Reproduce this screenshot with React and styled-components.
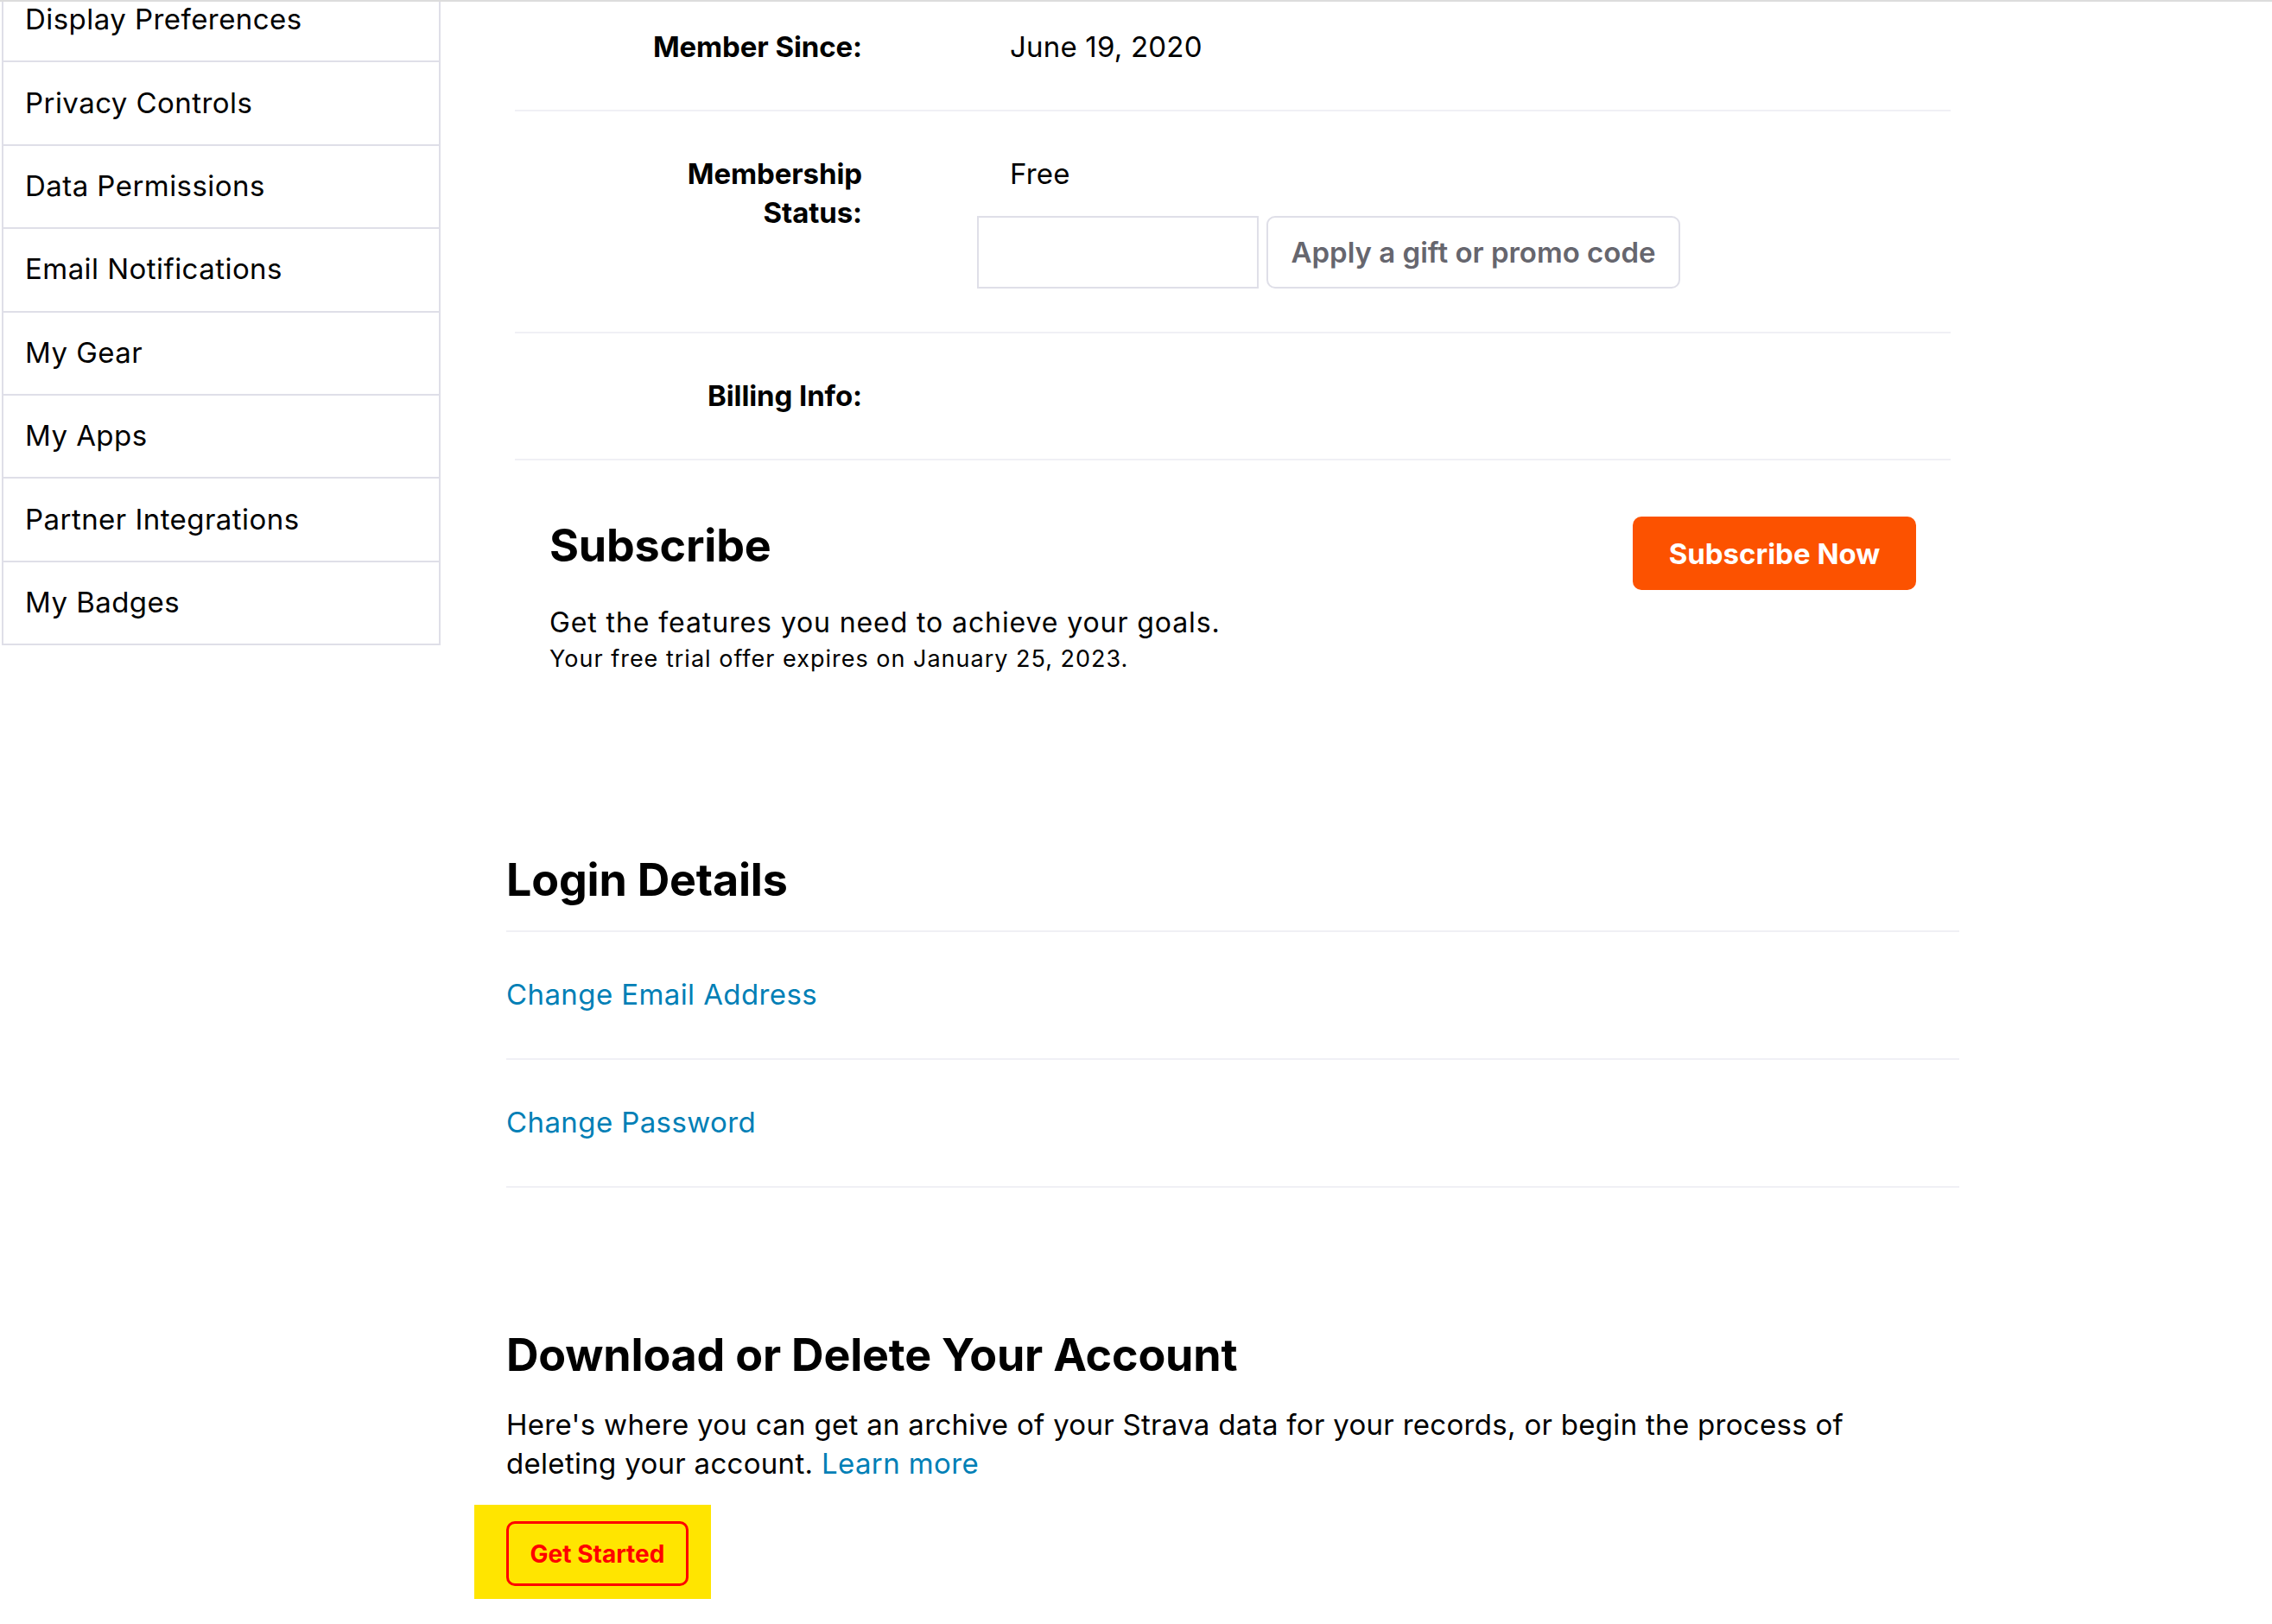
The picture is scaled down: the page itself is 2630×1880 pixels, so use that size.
import React from "react";
import styled, { createGlobalStyle } from "styled-components";

const GlobalStyle = createGlobalStyle`
    html,
    body {
        margin: 0;
        padding: 0;
        background: #fff;
    }
    body {
        font-family: Inter, "Noto Sans", "Liberation Sans", sans-serif;
        color: #000;
    }
    * {
        box-sizing: border-box;
    }
`;

const Viewport = styled.div`
    border-top: 2px solid #dcdcdc;
    height: 100vh;
    overflow: hidden;
    width: 100%;
`;

// page is scrolled a little, so the first sidebar row is cut off
const Scrolled = styled.div`
    display: flex;
    align-items: flex-start;
    margin-top: -26px;
`;

const Sidebar = styled.nav`
    border-left: 2px solid #dfdfe8;
    border-right: 2px solid #dfdfe8;
    flex-shrink: 0;
    margin-left: 2px;
    width: 508px;
`;

const SideItem = styled.a`
    align-items: center;
    border-bottom: 2px solid #dfdfe8;
    color: #000;
    display: flex;
    font-size: 33px;
    height: 96.4px;
    letter-spacing: 0.45px;
    padding: 0 0 2px 25px;
    text-decoration: none;
`;

const Main = styled.main`
    padding: 6px 0 0 76px;
    width: 1758px;
`;

const Table = styled.div`
    margin: 0 10px;
`;

const Row = styled.div`
    align-items: flex-start;
    border-bottom: 2px solid #f0f0f5;
    display: flex;
    padding: 50px 0;
`;

const Label = styled.div`
    flex-shrink: 0;
    font-size: 33px;
    font-weight: 700;
    letter-spacing: -0.1px;
    line-height: 45px;
    text-align: right;
    width: 402px;
`;

const Value = styled.div`
    display: flex;
    flex-direction: column;
    margin-left: 133px;
`;

const ValueText = styled.div`
    font-size: 33px;
    letter-spacing: 0.2px;
    line-height: 45px;
    padding-left: 38px;
`;

const PromoForm = styled.div`
    display: flex;
    gap: 9px;
    margin-top: 26px;
`;

const PromoInput = styled.input`
    border: 2px solid #dfdfe8;
    border-radius: 0;
    font-family: inherit;
    font-size: 30px;
    height: 84px;
    padding: 0 16px;
    width: 326px;
`;

const GhostButton = styled.button`
    background: #fff;
    border: 2px solid #dfdfe8;
    border-radius: 10px;
    color: #66666e;
    font-family: inherit;
    font-size: 33px;
    font-weight: 600;
    height: 84px;
    padding: 0 24px;
    width: 479px;
`;

const SubscribeBlock = styled.div`
    display: flex;
    justify-content: space-between;
    padding: 65px 40px 0;
`;

const Heading = styled.h2`
    font-size: 52px;
    font-weight: 700;
    letter-spacing: -0.2px;
    line-height: 62px;
    margin: ${(p) => p.$top || 0}px 0 0;
`;

const Lead = styled.p`
    font-size: 32px;
    letter-spacing: 0.9px;
    line-height: 44px;
    margin: 36px 0 0;
`;

const Fine = styled.p`
    font-size: 27px;
    letter-spacing: 1px;
    line-height: 36px;
    margin: 2px 0 0;
`;

const PrimaryButton = styled.button`
    background: #fc5200;
    border: none;
    border-radius: 10px;
    color: #fff;
    flex-shrink: 0;
    font-family: inherit;
    font-size: 33px;
    font-weight: 700;
    height: 85px;
    width: 328px;
`;

const Section = styled.section`
    width: 1682px;
`;

const LinkList = styled.div`
    border-top: 2px solid #f0f0f5;
    margin-top: 27px;
`;

const LinkRow = styled.div`
    border-bottom: 2px solid #f0f0f5;
    padding: 50px 0 51px;
`;

const TextLink = styled.a`
    color: #007fb6;
    font-size: 33px;
    letter-spacing: 0.4px;
    line-height: 45px;
    text-decoration: none;
`;

const Paragraph = styled.p`
    font-size: 33px;
    letter-spacing: 0.3px;
    line-height: 45px;
    margin: 27px 0 0;
`;

const Highlight = styled.div`
    background: #ffe500;
    display: inline-block;
    margin: 25px 0 0 -37px;
    padding: 19px 26px 15px 37px;
`;

const OutlineButton = styled.button`
    background: transparent;
    border: 3px solid #ff0000;
    border-radius: 10px;
    color: #ff0000;
    font-family: inherit;
    font-size: 28px;
    font-weight: 700;
    height: 75px;
    width: 211px;
`;

const menu = [
    "Display Preferences",
    "Privacy Controls",
    "Data Permissions",
    "Email Notifications",
    "My Gear",
    "My Apps",
    "Partner Integrations",
    "My Badges",
];

export default function App() {
    return (
        <Viewport>
            <GlobalStyle />
            <Scrolled>
                <Sidebar>
                    {menu.map((item) => (
                        <SideItem key={item} href="#">
                            {item}
                        </SideItem>
                    ))}
                </Sidebar>
                <Main>
                    <Section>
                        <Table>
                            <Row>
                                <Label>Member Since:</Label>
                                <Value>
                                    <ValueText>June 19, 2020</ValueText>
                                </Value>
                            </Row>
                            <Row>
                                <Label>
                                    Membership
                                    <br />
                                    Status:
                                </Label>
                                <Value>
                                    <ValueText>Free</ValueText>
                                    <PromoForm>
                                        <PromoInput type="text" />
                                        <GhostButton>
                                            Apply a gift or promo code
                                        </GhostButton>
                                    </PromoForm>
                                </Value>
                            </Row>
                            <Row>
                                <Label>Billing Info:</Label>
                            </Row>
                            <SubscribeBlock>
                                <div>
                                    <Heading $top={3}>Subscribe</Heading>
                                    <Lead>
                                        Get the features you need to achieve
                                        your goals.
                                    </Lead>
                                    <Fine>
                                        Your free trial offer expires on
                                        January 25, 2023.
                                    </Fine>
                                </div>
                                <PrimaryButton>Subscribe Now</PrimaryButton>
                            </SubscribeBlock>
                        </Table>

                        <Heading $top={207}>Login Details</Heading>
                        <LinkList>
                            <LinkRow>
                                <TextLink href="#">Change Email Address</TextLink>
                            </LinkRow>
                            <LinkRow>
                                <TextLink href="#">Change Password</TextLink>
                            </LinkRow>
                        </LinkList>

                        <Heading $top={163}>
                            Download or Delete Your Account
                        </Heading>
                        <Paragraph>
                            Here's where you can get an archive of your Strava
                            data for your records, or begin the process of
                            <br />
                            deleting your account.{" "}
                            <TextLink href="#">Learn more</TextLink>
                        </Paragraph>
                        <Highlight>
                            <OutlineButton>Get Started</OutlineButton>
                        </Highlight>
                    </Section>
                </Main>
            </Scrolled>
        </Viewport>
    );
}
